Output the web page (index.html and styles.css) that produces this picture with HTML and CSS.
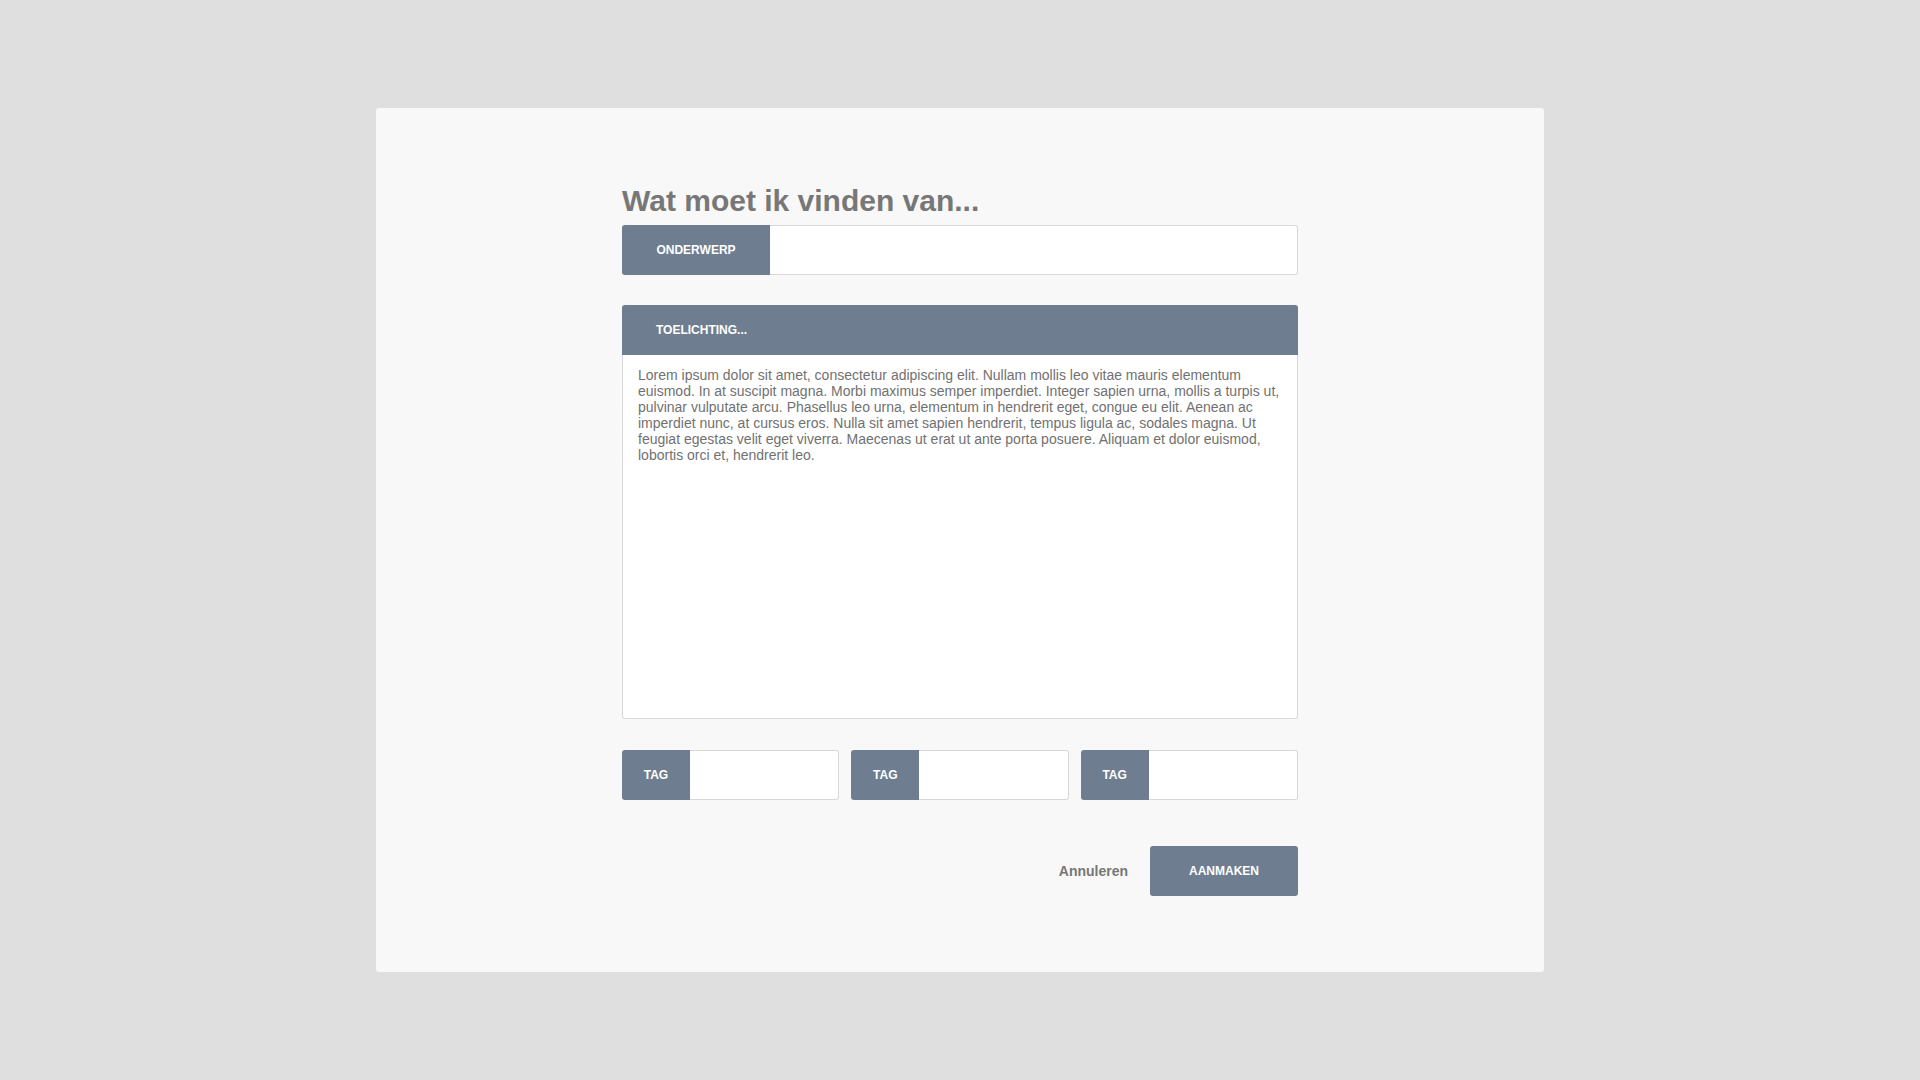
FILE: index.html
```html
<!DOCTYPE html>
<html lang="nl">
<head>
<meta charset="utf-8">
<title>Wat moet ik vinden van...</title>
<link rel="stylesheet" href="styles.css">
</head>
<body>
<div class="overlay">
  <div class="card">
    <form class="form">
      <h1 class="title">Wat moet ik vinden van...</h1>
      <div class="field field-subject">
        <label class="field-label subject-label">ONDERWERP</label>
        <div class="field-input"></div>
      </div>
      <div class="note">
        <div class="note-header">TOELICHTING...</div>
        <div class="note-body">Lorem ipsum dolor sit amet, consectetur adipiscing elit. Nullam mollis leo vitae mauris elementum euismod. In at suscipit magna. Morbi maximus semper imperdiet. Integer sapien urna, mollis a turpis ut, pulvinar vulputate arcu. Phasellus leo urna, elementum in hendrerit eget, congue eu elit. Aenean ac imperdiet nunc, at cursus eros. Nulla sit amet sapien hendrerit, tempus ligula ac, sodales magna. Ut feugiat egestas velit eget viverra. Maecenas ut erat ut ante porta posuere. Aliquam et dolor euismod, lobortis orci et, hendrerit leo.</div>
      </div>
      <div class="tags">
        <div class="field field-tag">
          <label class="field-label tag-label">TAG</label>
          <div class="field-input"></div>
        </div>
        <div class="field field-tag">
          <label class="field-label tag-label">TAG</label>
          <div class="field-input"></div>
        </div>
        <div class="field field-tag">
          <label class="field-label tag-label">TAG</label>
          <div class="field-input"></div>
        </div>
      </div>
      <div class="actions">
        <button type="button" class="btn-link">Annuleren</button>
        <button type="button" class="btn-primary">AANMAKEN</button>
      </div>
    </form>
  </div>
</div>
</body>
</html>
```

FILE: styles.css
```css
html, body {
  margin: 0;
  padding: 0;
}

body {
  background: #dfdfdf;
  font-family: "Liberation Sans", Arial, sans-serif;
  min-height: 1080px;
}

.overlay {
  display: flex;
  justify-content: center;
  padding-top: 108px;
}

.card {
  width: 1168px;
  height: 864px;
  box-sizing: border-box;
  background: #f8f8f8;
  border-radius: 3px;
  padding-top: 76px;
  display: flex;
  justify-content: center;
}

.form {
  width: 676px;
  margin: 0;
}

.title {
  margin: 0;
  font-size: 30px;
  line-height: 34px;
  font-weight: bold;
  color: #777777;
}

.field {
  display: flex;
  height: 50px;
  box-sizing: border-box;
}

.field-subject {
  margin-top: 7px;
}

.field-label {
  background: #6e7e90;
  color: #ffffff;
  font-size: 12px;
  font-weight: bold;
  display: flex;
  align-items: center;
  justify-content: center;
  border-radius: 3px 0 0 3px;
  flex: none;
}

.subject-label {
  width: 148px;
}

.tag-label {
  width: 68px;
}

.field-input {
  flex: 1;
  background: #ffffff;
  border: 1px solid #d8d8d8;
  border-left: none;
  border-radius: 0 3px 3px 0;
}

.note {
  margin-top: 30px;
}

.note-header {
  height: 50px;
  background: #6e7e90;
  color: #ffffff;
  font-size: 12px;
  font-weight: bold;
  display: flex;
  align-items: center;
  padding-left: 34px;
  border-radius: 3px 3px 0 0;
}

.note-body {
  height: 364px;
  box-sizing: border-box;
  background: #ffffff;
  border: 1px solid #d8d8d8;
  border-top: none;
  border-radius: 0 0 3px 3px;
  padding: 12px 12px 12px 15px;
  font-size: 14px;
  line-height: 16px;
  color: #717171;
}

.tags {
  margin-top: 31px;
  display: grid;
  grid-template-columns: repeat(3, 1fr);
  gap: 12px;
}

.actions {
  margin-top: 46px;
  display: flex;
  justify-content: flex-end;
  align-items: center;
  gap: 22px;
}

.btn-link {
  background: none;
  border: none;
  padding: 0;
  font-family: inherit;
  font-size: 14px;
  font-weight: bold;
  color: #777777;
  cursor: pointer;
}

.btn-primary {
  width: 148px;
  height: 50px;
  background: #6e7e90;
  border: none;
  border-radius: 3px;
  color: #ffffff;
  font-family: inherit;
  font-size: 12px;
  font-weight: bold;
  cursor: pointer;
}
```
